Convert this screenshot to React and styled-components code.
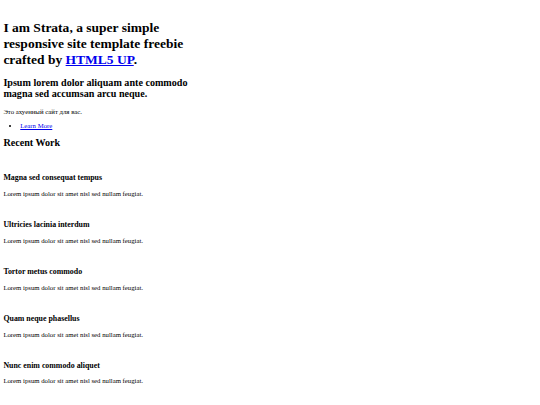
import React from "react";
import styled, { createGlobalStyle } from "styled-components";

const works = [
  "Magna sed consequat tempus",
  "Ultricies lacinia interdum",
  "Tortor metus commodo",
  "Quam neque phasellus",
  "Nunc enim commodo aliquet",
];

const GlobalStyle = createGlobalStyle`
  html, body {
    margin: 0;
    padding: 0;
    background: #ffffff;
  }
`;

// the page is laid out at 1280px and shrunk to the 540px window
const Page = styled.div`
  zoom: 0.421875;
  width: 1280px;
  box-sizing: border-box;
  padding: 8px;
  font-family: "Liberation Serif", "Times New Roman", serif;
  font-size: 16px;
  color: #000;
  a {
    color: #0000ee;
    text-decoration: underline;
  }
`;

const Header = styled.header`
  h1 {
    font-size: 32px;
    font-weight: bold;
    margin: 21.44px 0;
  }
`;

// empty line left by the missing avatar / thumbnail image
const Thumb = styled.a`
  display: block;
  height: ${(p) => p.$h || 20}px;
`;

const Section = styled.section`
  h2 {
    font-size: 24px;
    font-weight: bold;
    margin: 19.92px 0;
  }
  p {
    margin: 16px 0;
  }
`;

const Actions = styled.ul`
  margin: 16px 0;
  padding-left: 40px;
  list-style: disc;
`;

const Article = styled.article`
  h3 {
    font-size: 18.72px;
    font-weight: bold;
    margin: 18.72px 0;
  }
  p {
    margin: 16px 0;
  }
`;

export default function App() {
  return (
    <Page>
      <GlobalStyle />
      <Header>
        <div className="inner">
          <Thumb $h={19} />
          <h1>
            <strong>I am Strata</strong>, a super simple
            <br />
            responsive site template freebie
            <br />
            crafted by <a href="#">HTML5 UP</a>.
          </h1>
        </div>
      </Header>
      <div id="main">
        <Section>
          <header>
            <h2>
              Ipsum lorem dolor aliquam ante commodo
              <br />
              magna sed accumsan arcu neque.
            </h2>
          </header>
          <p>Это ахуенный сайт для вас.</p>
          <Actions>
            <li>
              <a href="#">Learn More</a>
            </li>
          </Actions>
        </Section>
        <Section>
          <h2>Recent Work</h2>
          <div>
            {works.map((title) => (
              <Article key={title}>
                <Thumb />
                <h3>{title}</h3>
                <p>Lorem ipsum dolor sit amet nisl sed nullam feugiat.</p>
              </Article>
            ))}
          </div>
        </Section>
      </div>
    </Page>
  );
}
